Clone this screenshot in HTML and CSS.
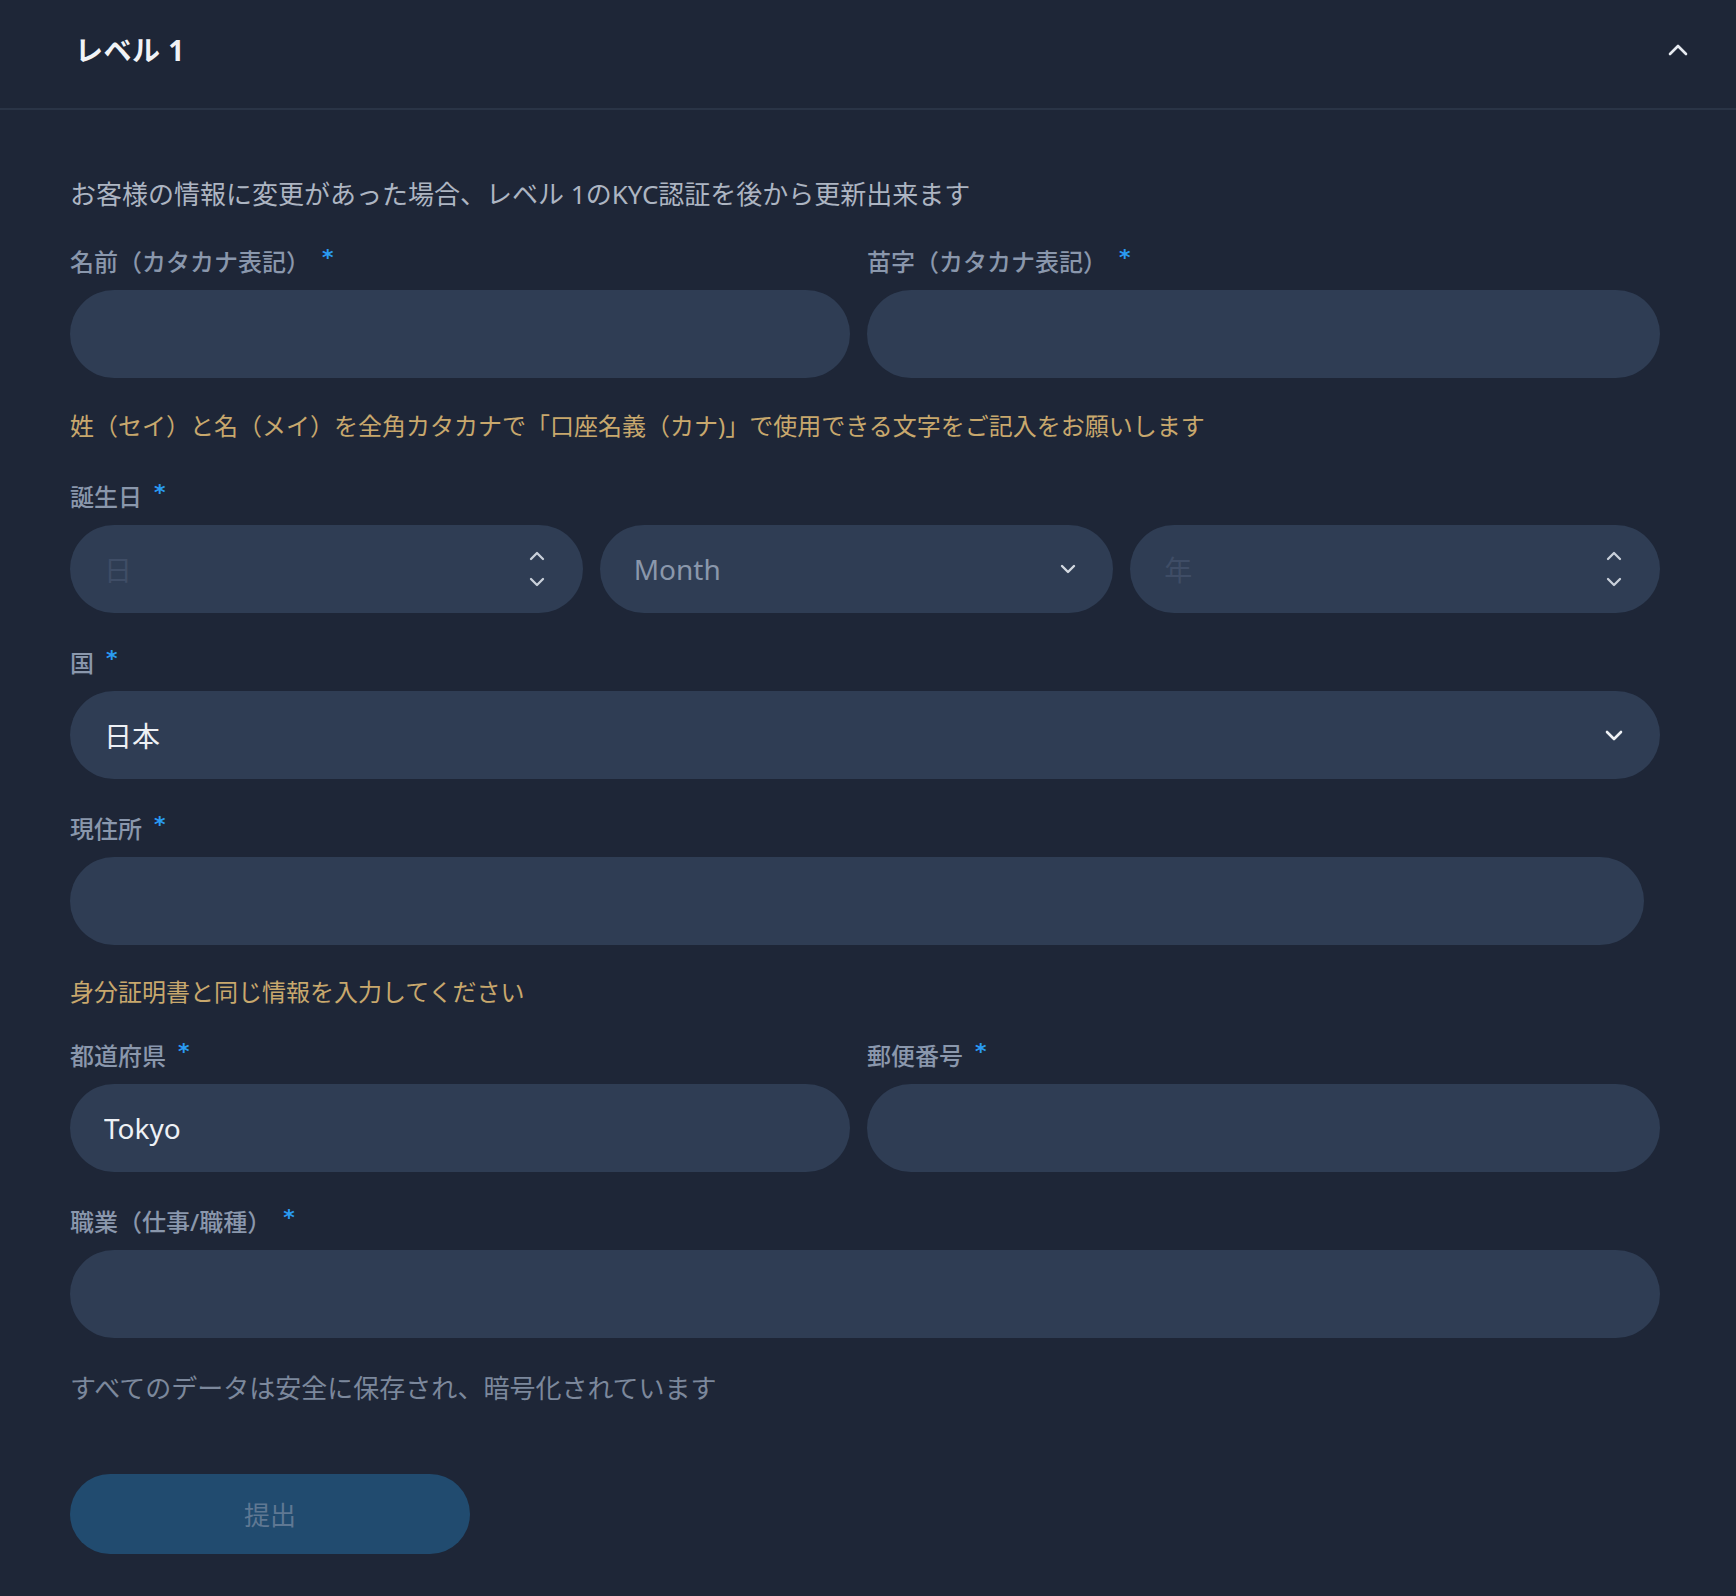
FILE: index.html
```html
<!DOCTYPE html>
<html lang="ja">
<head>
<meta charset="utf-8">
<title>レベル 1</title>
<link rel="stylesheet" href="styles.css">
</head>
<body>
<section class="panel">
  <header class="panel-head">
    <h2 class="panel-title">レベル 1</h2>
    <svg class="head-chevron" width="20" height="12" viewBox="0 0 20 12" aria-hidden="true"><path d="M2 10 L10 2 L18 10" fill="none" stroke="#e6eaf0" stroke-width="2.6" stroke-linecap="round" stroke-linejoin="round"/></svg>
  </header>
  <form class="form">
    <p class="intro">お客様の情報に変更があった場合、レベル 1のKYC認証を後から更新出来ます</p>

    <div class="row two">
      <div class="field">
        <label class="label">名前（カタカナ表記）<span class="req">*</span></label>
        <input class="control" type="text">
      </div>
      <div class="field">
        <label class="label">苗字（カタカナ表記）<span class="req">*</span></label>
        <input class="control" type="text">
      </div>
    </div>
    <p class="hint hint-name">姓（セイ）と名（メイ）を全角カタカナで「口座名義（カナ)」で使用できる文字をご記入をお願いします</p>

    <div class="field">
      <label class="label">誕生日<span class="req">*</span></label>
      <div class="row three">
        <div class="control box spin">
          <span class="placeholder">日</span>
          <svg class="spinner" width="18" height="40" viewBox="0 0 18 40" aria-hidden="true"><path d="M3 10 L9 4 L15 10 M3 30 L9 36 L15 30" fill="none" stroke="#c9d0da" stroke-width="2.3" stroke-linecap="round" stroke-linejoin="round"/></svg>
        </div>
        <div class="control box select">
          <span class="muted">Month</span>
          <svg class="chev" width="18" height="12" viewBox="0 0 18 12" aria-hidden="true"><path d="M3 3 L9 9 L15 3" fill="none" stroke="#d3d9e1" stroke-width="2.4" stroke-linecap="round" stroke-linejoin="round"/></svg>
        </div>
        <div class="control box spin">
          <span class="placeholder">年</span>
          <svg class="spinner" width="18" height="40" viewBox="0 0 18 40" aria-hidden="true"><path d="M3 10 L9 4 L15 10 M3 30 L9 36 L15 30" fill="none" stroke="#c9d0da" stroke-width="2.3" stroke-linecap="round" stroke-linejoin="round"/></svg>
        </div>
      </div>
    </div>

    <div class="field">
      <label class="label">国<span class="req">*</span></label>
      <div class="control box select">
        <span>日本</span>
        <svg class="chev" width="20" height="12" viewBox="0 0 20 12" aria-hidden="true"><path d="M3 3 L10 10 L17 3" fill="none" stroke="#eef1f5" stroke-width="2.6" stroke-linecap="round" stroke-linejoin="round"/></svg>
      </div>
    </div>

    <div class="field">
      <label class="label">現住所<span class="req">*</span></label>
      <input class="control address" type="text">
    </div>
    <p class="hint hint-id">身分証明書と同じ情報を入力してください</p>

    <div class="row two">
      <div class="field">
        <label class="label">都道府県<span class="req">*</span></label>
        <input class="control" type="text" value="Tokyo">
      </div>
      <div class="field">
        <label class="label">郵便番号<span class="req">*</span></label>
        <input class="control" type="text">
      </div>
    </div>

    <div class="field">
      <label class="label">職業（仕事/職種）<span class="req">*</span></label>
      <input class="control" type="text">
    </div>

    <p class="note">すべてのデータは安全に保存され、暗号化されています</p>

    <button class="submit" type="button">提出</button>
  </form>
</section>
</body>
</html>
```
FILE: styles.css
```css
html, body {
  margin: 0;
  padding: 0;
  background: #1e2637;
}

body {
  font-family: "Noto Sans", "Noto Sans CJK JP", sans-serif;
  color: #eef1f5;
}

.panel {
  background: #1e2637;
  min-height: 1596px;
}

.panel-head {
  display: flex;
  align-items: center;
  justify-content: space-between;
  height: 100px;
  padding: 0 48px 8px 75px;
  border-bottom: 2px solid #2a3446;
}

.panel-title {
  margin: 0;
  font-size: 28px;
  font-weight: 700;
  color: #f1f3f6;
  line-height: 36px;
  letter-spacing: 0.5px;
}

.head-chevron {
  display: block;
}

.form {
  display: flex;
  flex-direction: column;
  gap: 32px;
  padding: 66px 76px 42px 70px;
}

.intro {
  margin: 0;
  font-size: 26px;
  line-height: 36px;
  color: #adb5c2;
}

.row {
  display: grid;
}

.row.two {
  grid-template-columns: 780fr 793fr;
  column-gap: 17px;
}

.row.three {
  grid-template-columns: 513fr 514fr 530fr;
  column-gap: 17px;
}

.field {
  display: flex;
  flex-direction: column;
  min-width: 0;
}

.label {
  display: block;
  height: 32px;
  font-size: 24px;
  line-height: 32px;
  font-weight: 500;
  color: #8a97ac;
  margin-top: 2px;
  margin-bottom: 12px;
  white-space: nowrap;
}

.req {
  display: inline-block;
  margin-left: 12px;
  color: #2a9bf2;
  font-weight: 700;
  font-family: "DejaVu Sans", sans-serif;
  font-size: 22px;
  line-height: 1;
  vertical-align: 6px;
}

.control {
  box-sizing: border-box;
  height: 88px;
  width: 100%;
  border: none;
  outline: none;
  border-radius: 44px;
  background: #2f3d54;
  padding: 0 34px;
  font-family: inherit;
  font-size: 28px;
  color: #eef1f5;
}

.box {
  display: flex;
  align-items: center;
  justify-content: space-between;
}

.spin {
  padding-right: 37px;
}

.select {
  padding-right: 36px;
}

.address {
  width: auto;
  margin-right: 16px;
}

.placeholder {
  color: #3f4d66;
}

.muted {
  color: #8a97ab;
}

.spinner, .chev {
  display: block;
  flex: none;
}

.hint {
  margin: 0;
  font-size: 24px;
  line-height: 32px;
  color: #c8a86d;
}

.hint-name {
  margin-bottom: 5px;
}

.hint-id {
  margin-top: -1px;
  margin-bottom: -2px;
}

.note {
  margin: 0;
  font-size: 26px;
  line-height: 36px;
  color: #7c889c;
}

.submit {
  margin-top: 36px;
  width: 400px;
  height: 80px;
  border: none;
  border-radius: 40px;
  background: #214b6f;
  color: #5f7893;
  font-family: inherit;
  font-size: 26px;
}
```
